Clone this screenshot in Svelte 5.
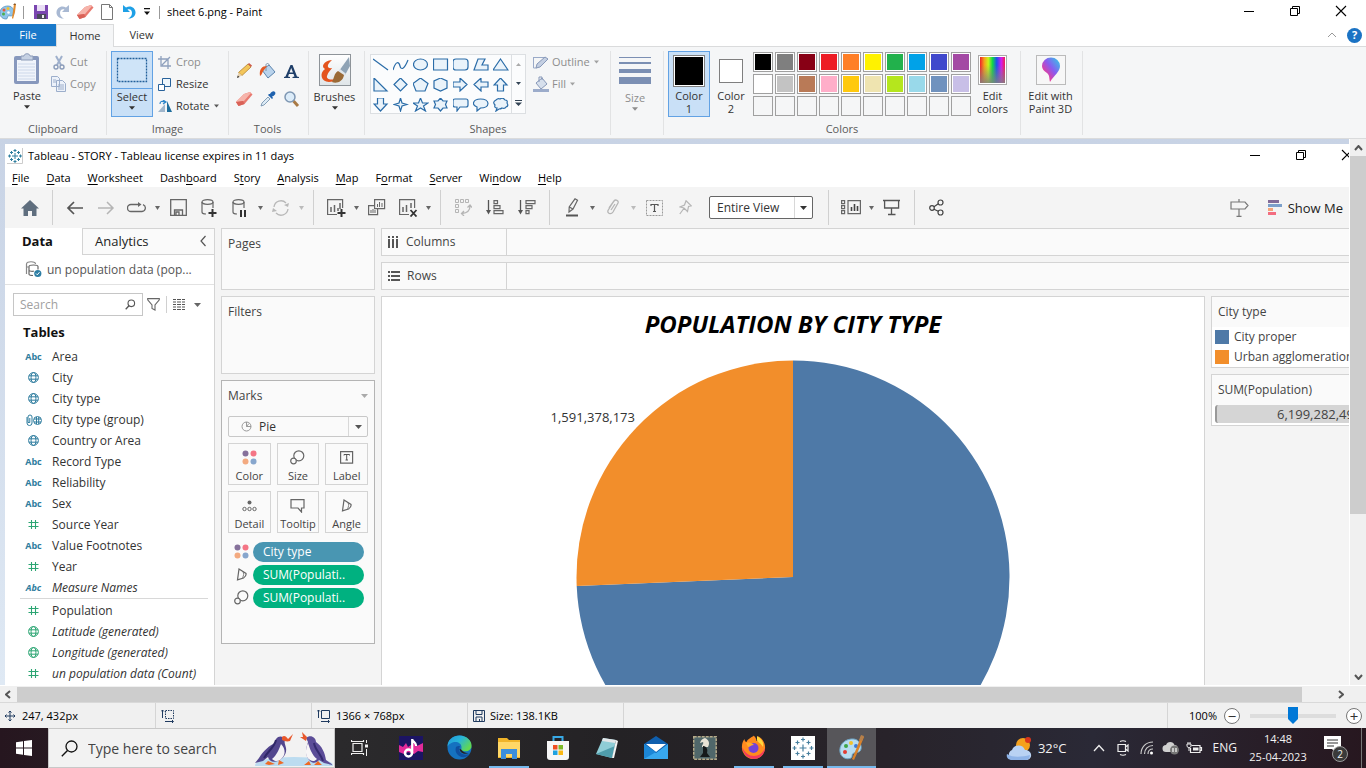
<script>
  const blue = '#2a6ca8';
  const g = '#666';
  const svg = {
    palette: [18, 18, `<path d="M8 3C3 3 0 6 0 10s3 6 6 6c2 0 1-2 2-3s3 1 5-1 1-9-5-9z" fill="#8ec4ea" stroke="#5b93bd" stroke-width=".8"/><circle cx="4" cy="7" r="1.500" fill="#e85a3a"/><circle cx="8" cy="5.500" r="1.500" fill="#f2c12e"/><circle cx="3.500" cy="11" r="1.500" fill="#4caf50"/><circle cx="8.500" cy="9.500" r="1.300" fill="#fff"/><path d="M14 1l2 0-1 8-2 7-1-1z" fill="#e08a2e"/><path d="M13 2l3 0-1-2z" fill="#8a5a2a"/>`],
    floppy: [16, 16, `<path d="M1 1h14v14H1z" fill="#7a46b0"/><path d="M4 1h8v6H4z" fill="#e9def5"/><path d="M4 10h9v5H4z" fill="#4b4b5c"/><path d="M9 11h2v3H9z" fill="#eee"/>`],
    redo: [16, 16, `<path d="M14 1v7H7l2.500-2.500C7 4.500 5 6 5 9s2 4.500 4 5.500C5 15 1 12 1.500 8S6 1 11 3.500z" fill="#a9b9d3"/>`],
    undo: [16, 16, `<path d="M2 1v7h7L6.500 5.500C9 4.500 11 6 11 9s-2 4.500-4 5.500C11 15 15 12 14.500 8S10 1 5 3.500z" fill="#1ea0e6"/>`],
    eraser: [18, 16, `<path d="M9 3l6-2 2.500 2.500-8 9.500-6 2L1 11z" fill="#e8796f"/><path d="M9 3l6-2 1 1-7 8-7 1-1-.5z" fill="#f6b4ab"/><path d="M1 11l7-1 1.500 3-6 2z" fill="#d96258"/>`],
    page: [14, 16, `<path d="M1.500.5h8l3 3v12h-11z" fill="#fff" stroke="#777"/><path d="M9.500.5v3h3" fill="none" stroke="#777"/>`],
    custom: [8, 8, `<path d="M1 0h6v1.300H1zM1 3.500h6L4 7z" fill="#111"/>`],
    down: [7, 4, `<path d="M0 0h7L3.500 4z" fill="currentColor"/>`],
    min: [12, 12, `<path d="M1 6.500h10" stroke="#000"/>`],
    restore: [12, 12, `<path d="M1.500 3.500h7v7h-7zM3.500 3.500v-2h7v7h-2" fill="none" stroke="#000"/>`],
    close: [12, 12, `<path d="M1 1l10 10M11 1L1 11" stroke="#000" stroke-width="1.100"/>`],
    paste: [28, 32, `<rect x="1" y="3" width="25" height="28" rx="2" fill="#8798bd"/><path d="M4 7h19v21H4z" fill="#f0f4fb"/><path d="M5 11h17M5 14h17M5 17h17M5 20h17M5 23h17M5 26h17" stroke="#cdd8ea"/><path d="M8 7V3h3c0-3 6-3 6 0h3v4z" fill="#c6d1e3" stroke="#8c9bb8"/>`],
    cut: [16, 15, `<path d="M5 1l5 9M11 1L6 10" stroke="#9fb0cc" stroke-width="2"/><circle cx="5" cy="12" r="2" fill="none" stroke="#8b9cba" stroke-width="1.400"/><circle cx="11" cy="12" r="2" fill="none" stroke="#8b9cba" stroke-width="1.400"/>`],
    copy: [16, 16, `<path d="M.5.500h6l2 2v8h-8zM5.500 4.500h6l3 3v8h-9z" fill="#edf2fa" stroke="#9caecb"/><path d="M7 9h6M7 11h6M7 13h6M2 4h3M2 6h3" stroke="#9caecb"/>`],
    selectbox: [32, 26, `<rect x="1.500" y="1.500" width="29" height="23" fill="#cfe4f8" stroke="#215f9a" stroke-width="1.300" stroke-dasharray="2 1"/>`],
    crop: [15, 13, `<path d="M3 0v10h10M0 3h10v10M4 9l8-8" fill="none" stroke="#8ea0bd" stroke-width="1.300"/>`],
    resize: [15, 13, `<path d="M4.500.5h8v8h-8z" fill="#eef6fc" stroke="#28629a"/><path d="M.5 6.500h6v6h-6z" fill="#fff" stroke="#28629a"/>`],
    rotate: [15, 13, `<path d="M7 12V4L0 12z" fill="#9fb6cc"/><path d="M9 12V1l5 11z" fill="#1d6d9c"/><path d="M2 4c0-3 2-3 5-2M5 0l3 2-3 2" fill="none" stroke="#2e86c9" stroke-width="1.200"/>`],
    pencil: [16, 16, `<path d="M12 1l3 3-9 8.500L2.500 9.500z" fill="#f3c65b" stroke="#b3822c" stroke-width=".8"/><path d="M2.500 9.500L1 15l5-2.500z" fill="#e9d3b0"/><path d="M1 15l.8-2.500L3.500 14z" fill="#333"/><path d="M12 1l1-1 3 2.500L15 4z" fill="#cf5b4b"/>`],
    bucket: [17, 16, `<path d="M3 7l7-5 6 7-7 6z" fill="#b9d3ec" stroke="#5c84ad"/><path d="M7 8V2c0-2 3-2 3 0" fill="none" stroke="#7c93ab"/><path d="M8 3C3 3 0 6 1 13c2-1 2-4 4-6z" fill="#e45a24"/>`],
    letter: [15, 15, `<path d="M0 14v-1l1.500-.5L6.500 1h2l4.500 11.500 2 .5v1H8.500v-1l2-.5-1-2.500H5l-1 2.500 2 .5v1zM5.500 8.500h3.500L7.200 4z" fill="#1f3f69"/>`],
    dropper: [16, 16, `<path d="M1 15l1-3 6-6 2 2-6 6z" fill="#dceaf5" stroke="#6a8aa8" stroke-width=".8"/><path d="M8 4l4 4 1-1-1-1.500c3-1 4-3 3-4.500S11.500 0 10 3L9 3z" fill="#1f62ae"/>`],
    lens: [16, 17, `<path d="M9.500 10l4.500 5" stroke="#a97a45" stroke-width="3"/><circle cx="6" cy="6" r="5" fill="#dcecf9" stroke="#7e97b3" stroke-width="1.500"/>`],
    brush: [32, 32, `<defs><linearGradient id="bg" x2="0" y2="1"><stop stop-color="#fff"/><stop offset="1" stop-color="#dfe5e8"/></linearGradient></defs><rect x=".5" y=".5" width="31" height="31" fill="url(#bg)" stroke="#8e9499"/><path d="M13 6C4 7 2 13 6 15c-6 4-4 13 4 13 5 0 9-3 10-5-6 4-13 3-12-1s4-6 5-8c-5 1-6-3 0-8z" fill="#e4541d"/><path d="M20 17L30 3l1 9-5 9z" fill="#8fa3b5"/><path d="M21 15l5 4 1 1-2 3-6-5z" fill="#dfe5ea"/><path d="M19 17l6 4c-1 7-8 9-12 7 2-3 2-9 6-11z" fill="#9a6a36"/>`],
    outline: [16, 14, `<path d="M.5 2.500h12M.5 2v11h3" fill="none" stroke="#9aaac8"/><path d="M12 2l3 2-8 8-4 1 1-4z" fill="#c4cfe2" stroke="#8798b8"/>`],
    fillb: [16, 16, `<path d="M3 7l6-5 5 6-6 5z" fill="#d6dfec" stroke="#8798b8"/><path d="M6 6V1h3v3" fill="none" stroke="#8798b8"/><path d="M0 13h16v3H0z" fill="#9caccb"/>`],
    linesz: [32, 32, `<path d="M0 2h32v1H0zM0 7h32v2H0zM0 14h32v4H0zM0 22h32v7H0z" fill="#7b8fb3"/>`],
    rainbow: [29, 30, `<defs><linearGradient id="rb"><stop stop-color="#f0202a"/><stop offset=".17" stop-color="#f6a01c"/><stop offset=".33" stop-color="#c9f51a"/><stop offset=".5" stop-color="#10d848"/><stop offset=".67" stop-color="#1c50f0"/><stop offset=".85" stop-color="#d21cf0"/><stop offset="1" stop-color="#ee2050"/></linearGradient><linearGradient id="rg" x2="0" y2="1"><stop stop-color="#808080" stop-opacity="0"/><stop offset=".3" stop-color="#808080" stop-opacity="0"/><stop offset="1" stop-color="#808080" stop-opacity=".85"/></linearGradient></defs><rect x=".5" y=".5" width="28" height="29" fill="#fff" stroke="#aaa"/><path d="M2 2h25v26H2z" fill="url(#rb)"/><path d="M2 2h25v26H2z" fill="url(#rg)"/>`],
    paint3d: [30, 30, `<defs><linearGradient id="p3" x1="1" x2="0" y2="1"><stop stop-color="#2ad4e6"/><stop offset=".45" stop-color="#8a5af0"/><stop offset=".75" stop-color="#e83c9a"/><stop offset="1" stop-color="#f7a52c"/></linearGradient></defs><rect x=".5" y=".5" width="29" height="29" fill="#f7f7f7" stroke="#bbb"/><path d="M6 11a9 8.500 0 0118 0c0 6-6 9-10 16-1-4 0-6-3-9-3-2-5-4-5-7z" fill="url(#p3)"/>`],
    tableau: [16, 16, `<path d="M8 5v6M5 8h6M8 1v3M6.500 2.500h3M8 12v3M6.500 13.500h3M1 8h3M2.500 6.500v3M12 8h3M13.500 6.500v3M4.500 3v3M3 4.500h3M11.500 3v3M10 4.500h3M4.500 10v3M3 11.500h3M11.500 10v3M10 11.500h3" stroke="#2f7f9f" fill="none"/><path d="M0 15.500h15.500V0" fill="none" stroke="#ccc"/>`],
    home: [18, 16, `<path d="M9 0l9 8.500h-2.500V16H11v-5H7v5H2.500V8.500H0z" fill="#5f6e7e"/>`],
    back: [18, 14, `<path d="M17 7H2M8 1L2 7l6 6" fill="none" stroke="#555" stroke-width="1.700"/>`],
    fwd: [18, 14, `<path d="M1 7h15M10 1l6 6-6 6" fill="none" stroke="#b5b5b5" stroke-width="1.500"/>`],
    loop: [20, 12, `<path d="M12 2.500H4a3.500 3.500 0 000 7h11a3.500 3.500 0 001-6.800" fill="none" stroke="${g}" stroke-width="1.300"/><path d="M11 0l3.500 2.500L11 5z" fill="${g}"/>`],
    save: [17, 17, `<path d="M.7.700h15.600v15.600H.7zM4.500 16v-5h8v5M6 16v-3h3v3" fill="none" stroke="${g}" stroke-width="1.300"/>`],
    dbplus: [16, 18, `<ellipse cx="6.500" cy="3" rx="5.500" ry="2.300" fill="none" stroke="${g}" stroke-width="1.200"/><path d="M1 3v10c0 1.500 2 2 4 2M12 3v6" fill="none" stroke="${g}" stroke-width="1.200"/><path d="M11.500 10v8M7.500 14h8" stroke="#333" stroke-width="2"/>`],
    dbpause: [16, 18, `<ellipse cx="6.500" cy="3" rx="5.500" ry="2.300" fill="none" stroke="${g}" stroke-width="1.200"/><path d="M1 3v10c0 1.500 2 2 4 2M12 3v6" fill="none" stroke="${g}" stroke-width="1.200"/><path d="M9 11v7M13 11v7" stroke="#333" stroke-width="2"/>`],
    refresh: [18, 16, `<path d="M2 7a7 7 0 0112-4M16 9a7 7 0 01-12 4" fill="none" stroke="#b8b8b8" stroke-width="1.300"/><path d="M17 3l-1 4-4-2zM0 12l1-4 4 3z" fill="#b8b8b8"/>`],
    chartplus: [19, 18, `<path d="M10 15.500H.6V.6h15v8.500" fill="none" stroke="${g}" stroke-width="1.200"/><path d="M4 8v5M7.500 6v7M11 9v3M13 4v6" stroke="${g}" stroke-width="1.500"/><path d="M14.500 10v8M10.500 14h8" stroke="#333" stroke-width="2"/>`],
    dup: [18, 17, `<path d="M6.600.6h10v9h-10zM6 6.600H.6v9h9V10" fill="none" stroke="${g}" stroke-width="1.200"/><path d="M9.500 5v3M11.500 3v5M14 4v4M3 11v3M5 10v4M7 11v3" stroke="${g}"/>`],
    chartx: [19, 18, `<path d="M10 15.500H.6V.6h15v8.500" fill="none" stroke="${g}" stroke-width="1.200"/><path d="M4 8v5M7.500 6v7M12 4v5" stroke="${g}" stroke-width="1.500"/><path d="M11.500 11l6 6.500M17.500 11l-6 6.500" stroke="#333" stroke-width="1.800"/>`],
    swap: [17, 17, `<path d="M.5.5h3v3h-3zM5.500.5h3v3h-3zM10.500.5h3v3h-3zM.5 5.500h3v3h-3zM.5 10.500h3v3h-3z" fill="none" stroke="#b5b5b5"/><path d="M15 7c0 4-3 7-8 7.500M12.500 8.500L15 6l2 2.500M9 12l-2.500 2.500L9 17" fill="none" stroke="#b5b5b5" stroke-width="1.300"/>`],
    sortasc: [18, 15, `<path d="M2.500 0v12" stroke="#555" stroke-width="1.300"/><path d="M0 10h5l-2.500 4.500z" fill="#555"/><path d="M8 .6h3.500v3H8zM8 5.600h6v3H8zM8 10.600h9v3H8z" fill="none" stroke="${g}" stroke-width="1.200"/>`],
    sortdesc: [18, 15, `<path d="M2.500 0v12" stroke="#555" stroke-width="1.300"/><path d="M0 10h5l-2.500 4.500z" fill="#555"/><path d="M8 .6h9v3H8zM8 5.600h6v3H8zM8 10.600h3v3H8z" fill="none" stroke="${g}" stroke-width="1.200"/>`],
    marker: [13, 19, `<path d="M9 .8l2.500 1.400L7 11 3 14l.2-5zM3.200 9L7 11" fill="none" stroke="${g}" stroke-width="1.200"/><path d="M0 16.500h12v2H0z" fill="#555"/>`],
    clip: [14, 17, `<path d="M3 9l5-7c1.500-2 5-.5 4 2L7 13c-2 3-6 1.500-5-1.500L6 5M5 11l4-6" fill="none" stroke="#b5b5b5" stroke-width="1.300"/>`],
    tbox: [17, 16, `<rect x=".5" y=".5" width="16" height="15" fill="none" stroke="#999" stroke-dasharray="2 1"/><path d="M5 6V4.500h7V6M8.500 4.500v7M7 11.500h3" fill="none" stroke="#555" stroke-width="1.200"/>`],
    pin: [13, 16, `<path d="M7 .8l5.300 5-2.800.7-1 5L5 8 1 7l4.500-2zM4.800 8.500L.8 14" fill="none" stroke="#b5b5b5" stroke-width="1.200"/>`],
    layout: [20, 15, `<path d="M.6.600h3v3h-3zM.6 5.600h3v3h-3zM.6 10.600h3v3h-3zM7 .6h12.400v13H7z" fill="none" stroke="${g}" stroke-width="1.200"/><path d="M10.500 7v4M13.500 4v7M16.500 6v5" stroke="#444" stroke-width="1.600"/>`],
    present: [18, 17, `<path d="M0 1.500h17M1.600 2v7h14V2M8.500 9v6M5 15.500h7.500" fill="none" stroke="#555" stroke-width="1.300"/>`],
    share: [16, 17, `<circle cx="3" cy="9" r="2.300" fill="none" stroke="#444" stroke-width="1.200"/><circle cx="11.500" cy="3.500" r="2.500" fill="none" stroke="#444" stroke-width="1.200"/><circle cx="11.500" cy="13.500" r="2.500" fill="none" stroke="#444" stroke-width="1.200"/><path d="M5 7.800l4.300-3M5 10.200l4.300 2" stroke="#444" stroke-width="1.200"/>`],
    sign: [19, 18, `<path d="M1 3h14l3 3.500-3 3.500H1zM9 0v3M9 10v7M6.500 17.400h5" fill="none" stroke="#777" stroke-width="1.200"/>`],
    showme: [14, 15, `<path d="M0 0h11v3H0z" fill="#826b98"/><path d="M0 4h14v3H0z" fill="#7c9fca"/><path d="M0 8h5v3H0z" fill="#f3a479"/><path d="M0 12h8v3H0z" fill="#f36d80"/>`],
    source: [17, 17, `<path d="M1.500 13V3c0-3 9-3 9 0M1.500 6h2" fill="none" stroke="#888" stroke-width="1.200"/><path d="M4 5.500c0-2 9-2 9 0v3M4 5.500V13c0 1 2 1.500 4 1.500M4 9c0 1.500 4 1.500 5 1" fill="none" stroke="#666" stroke-width="1.200"/><circle cx="12.800" cy="12.500" r="3.600" fill="#2d7ea4"/><path d="M11 12.500l1.300 1.300 2.200-2.600" fill="none" stroke="#fff"/>`],
    find: [11, 11, `<circle cx="6.300" cy="4.300" r="3.300" fill="none" stroke="#555" stroke-width="1.100"/><path d="M4 6.800L.7 10.300" stroke="#555" stroke-width="1.300"/>`],
    filter: [13, 13, `<path d="M.7.600h11.600v1.200L8 7v5L5 10.500V7L.7 1.800z" fill="none" stroke="#666" stroke-width="1.100"/>`],
    grid: [13, 11, `<path d="M0 .5h3M4 .5h4M9 .5h3M0 3h3M4 3h4M9 3h3M0 5.500h3M4 5.500h4M9 5.500h3M0 8h3M4 8h4M9 8h3M0 10.500h3M4 10.500h4M9 10.500h3" stroke="#555"/>`],
    globe: [11, 11, `<circle cx="5.500" cy="5.500" r="4.900" fill="none" stroke="currentColor"/><ellipse cx="5.500" cy="5.500" rx="2.400" ry="4.900" fill="none" stroke="currentColor"/><path d="M1 3.800h9M1 7.200h9" stroke="currentColor"/>`],
    group: [16, 12, `<path d="M1 3v6a2.500 2.500 0 005 0V3a2 2 0 00-4 0v5.500h1.800V4" fill="none" stroke="currentColor"/><circle cx="11.500" cy="6.500" r="4" fill="#fff" stroke="currentColor"/><path d="M8 5h7M8 8h7M10.500 3v7M12.700 3v7" stroke="currentColor"/>`],
    hash: [11, 11, `<path d="M3.500 1v9M7.500 1v9M.5 3.500h10M.5 7.500h10" stroke="currentColor" stroke-width="1.100"/>`],
    columns: [11, 12, `<path d="M0 0h2v2H0zM0 3h2v9H0zM4 0h2v2H4zM4 3h2v9H4zM8 0h2v2H8zM8 3h2v9H8z" fill="#555"/>`],
    rows: [12, 10, `<path d="M0 0h2v2H0zM3 0h9v2H3zM0 4h2v2H0zM3 4h9v2H3zM0 8h2v2H0zM3 8h9v2H3z" fill="#555"/>`],
    pie: [11, 11, `<circle cx="5.500" cy="5.500" r="4.500" fill="none" stroke="#999"/><path d="M5.500 1v4.500H10M5.500 5.500l2.500-3" fill="none" stroke="#999"/>`],
    color: [15, 15, `<circle cx="3.500" cy="3.500" r="3" fill="#86719b"/><circle cx="11.500" cy="3.500" r="3" fill="#f47585"/><circle cx="3.500" cy="11.500" r="3" fill="#f3aa80"/><circle cx="11.500" cy="11.500" r="3" fill="#87a6cd"/>`],
    size: [15, 15, `<circle cx="8.800" cy="5.800" r="5" fill="none" stroke="#666" stroke-width="1.200"/><circle cx="3.500" cy="11" r="2.800" fill="#fafafa" stroke="#666" stroke-width="1.200"/>`],
    label: [14, 13, `<path d="M.6.600h12v11.500H.6z" fill="none" stroke="#666" stroke-width="1.200"/><path d="M4 4.500V3.500h5.500v1M6.700 3.500v5.500M5.500 9h2.500" fill="none" stroke="#555"/>`],
    detail: [15, 12, `<circle cx="7.500" cy="2.500" r="2" fill="#666"/><circle cx="2.500" cy="9" r="1.700" fill="none" stroke="#666"/><circle cx="7.500" cy="9" r="1.700" fill="none" stroke="#666"/><circle cx="12.500" cy="9" r="1.700" fill="none" stroke="#666"/>`],
    tooltip: [15, 14, `<path d="M1 .6h13v8.400h-2.500v4L8 9H1z" fill="none" stroke="#666" stroke-width="1.200"/>`],
    angle: [12, 13, `<path d="M3 1l7 4.500c.5 2-1 3.500-2.500 4.500L1.500 11.800z" fill="none" stroke="#666" stroke-width="1.200"/><path d="M7 3.800c1 1.500.8 3.700-.5 6" fill="none" stroke="#666" stroke-width=".8"/>`],
    move: [12, 12, `<path d="M6 1v10M1 6h10M4.500 2.500L6 1l1.500 1.500M4.500 9.500L6 11l1.500-1.500M2.500 4.500L1 6l1.500 1.500M9.500 4.500L11 6 9.500 7.500" fill="none" stroke="#1f3a5f"/>`],
    selsize: [14, 14, `<rect x="4.500" y="1.500" width="8" height="8" fill="none" stroke="#1f3a5f" stroke-dasharray="1.500 1"/><path d="M1.500 1v8M0 2.500L1.500 1 3 2.500M4 12.500h8M11 11l1.500 1.500L11 14" fill="none" stroke="#1f3a5f"/>`],
    imgsize: [14, 14, `<path d="M4.500 1.500h8v8h-8zM1.500 1v8M0 2.500L1.500 1 3 2.500M4 12.500h8M11 11l1.500 1.500L11 14" fill="none" stroke="#1f3a5f"/>`],
    disk: [12, 12, `<path d="M.5.5h11v11H.5zM3 .5v4h6v-4M3 11.500V7h6v4.500M6.500 9v2" fill="none" stroke="#1f3a5f"/>`],
    win: [16, 16, `<path d="M0 2.200L7 1.200V7.500H0zM8 1l8-1v7.500H8zM0 8.500h7v6.300l-7-1zM8 8.500h8V16l-8-1z" fill="#fff"/>`],
    search: [17, 17, `<circle cx="10.500" cy="6.500" r="5.500" fill="none" stroke="#111" stroke-width="1.300"/><path d="M6.500 10.500L.8 16.200" stroke="#111" stroke-width="1.400"/>`],
    penguins: [80, 36, `<ellipse cx="40" cy="35" rx="39" ry="8" fill="#bcdcf0"/><path d="M29 7c-5-2-8 2-8 6C16 15 9 21 5 28l-4 5 8-2 5-4c1 4 5 6 10 4 6-3 9-8 8-13-1-4-2-6-1-8z" fill="#53468e"/><path d="M27 14c5 5 5 12-1 16-3 2-6 1-8-1 5-4 7-10 9-15z" fill="#f4f2f5"/><path d="M28 7c2-2 4-1 6 2l5-5-3 7c-3 1-6 0-8-1z" fill="#e8582c"/><path d="M22 10c-2 8-8 11-12 18" stroke="#2f2767" fill="none" stroke-width="2"/><path d="M14 31l7 3-6 1-4-1zM25 30l5 3-6 2z" fill="#ee6a24"/><path d="M52 8c4-4 10-1 10 4 6 4 9 11 10 18l7 5-9-2-5-3c-2 3-6 4-9 1-6-6-4-13-2-19z" fill="#5c4d98"/><path d="M54 13c-3 7-3 14 2 17 3 2 5 1 7-1-5-4-7-10-9-16z" fill="#f7f5f6"/><path d="M53 7l-5-5 1 5-3 0 6 4z" fill="#e8582c"/><path d="M60 13c1 7 7 11 9 18" stroke="#352b70" fill="none" stroke-width="2"/><path d="M55 31l-5 4h7zM64 31l4 4h-8z" fill="#ee6a24"/>`],
    taskview: [17, 17, `<path d="M2 4.500h9v8H2zM.5 1v1.500h12V1M.5 16v-1.500h12V16" fill="none" stroke="#eee" stroke-width="1.200"/><path d="M15.500 1v3M15.500 10v7" stroke="#eee"/><path d="M14 5.500h3v3h-3z" fill="#eee"/>`],
    music: [24, 24, `<path d="M0 0h24v24H0z" fill="#1c1463"/><path d="M0 9l4 2 3-4 2 4 6-4 3 3 6-3v9l-5-1-4 3-6-2-4 2-5-2z" fill="#e42b9b"/><circle cx="9.500" cy="17" r="3.500" fill="none" stroke="#fff" stroke-width="2.500"/><path d="M13.200 17V3c0 3 4 3 4 7" fill="none" stroke="#fff" stroke-width="2.200"/>`],
    edge: [25, 25, `<defs><linearGradient id="eg" x2="1" y2=".6"><stop stop-color="#2196dd"/><stop offset=".5" stop-color="#28b5d8"/><stop offset="1" stop-color="#62d84f"/></linearGradient></defs><circle cx="12.500" cy="12.500" r="12" fill="#1572c0"/><path d="M.6 12C0 5 6 .5 12.500.5 20 .5 25 6 24.500 11c0 4-4 6-8 5-3-.5-2-2-2-4 0-3-3-5-6-5S1 9 .6 12z" fill="url(#eg)"/><path d="M9 12c-2 6 3 11 9 10 2-.5 3-1.500 4-3-5 2-10-1-10-5l1-3c-2 0-3 0-4 1z" fill="#0f4fa0"/><path d="M12.500 14c.5 4 5 6 10 4-2 .5-6-.5-7-2s-3-3-3-2z" fill="#252326"/>`],
    folder: [24, 24, `<path d="M1 2h9l2 2h11v18H1z" fill="#f0b429"/><path d="M1 6h22v15H1z" fill="#ffd766"/><path d="M4 23V13h16v10h-5v-5H9v5z" fill="#3b8edb"/>`],
    store: [24, 26, `<path d="M7.500 7V2h9v5" fill="none" stroke="#38a9e6" stroke-width="2"/><path d="M1 6h22v16c0 2-1 3-3 3H4c-2 0-3-1-3-3z" fill="#f6f6f6"/><path d="M7 10h4.500v4.500H7z" fill="#ef4f23"/><path d="M12.500 10H17v4.500h-4.500z" fill="#7cba28"/><path d="M7 15.500h4.500V20H7z" fill="#1fa2e0"/><path d="M12.500 15.500H17V20h-4.500z" fill="#fbb813"/>`],
    notepad: [24, 24, `<path d="M8 2l13 2-4 18L1 18z" fill="#8fcdd6"/><path d="M8 2l13 2-1 3L7 5z" fill="#e2e6e8"/><path d="M1 18l16 4 3-12z" fill="#4f9dac"/><path d="M21 4l2 1-4 17-2 0z" fill="#f4f4f4"/>`],
    mail: [26, 24, `<path d="M1 8L13 0l12 8v15H1z" fill="#0f5fae"/><path d="M1 8l12 9 12-9v15H1z" fill="#38a8ee"/><path d="M3 8h20l-10 8z" fill="#fff"/><path d="M1 8l12 8L1 23z" fill="#1c86d6"/>`],
    chess: [24, 24, `<rect x=".7" y=".7" width="22.500" height="22.500" fill="#50676a" stroke="#b6ab8a" stroke-width="1.500" stroke-dasharray="3 1"/><path d="M12 2c4 2 5 5 3 9H9c0-3 2-3 1-5l-3 1c1-3 2-4 5-5z" fill="#e9e4d6"/><path d="M10 10c4 0 5 4 4 7l3 4H7l3-4z" fill="#15191a"/>`],
    firefox: [25, 25, `<path d="M12.500 1c0-1 3 2 3 5 2 0 2-3 1-5 6 3 8 8 7.500 13A11.500 11.500 0 111 11c0-3 1-5 2.500-7 0 2 1 3 2 3 1-3 4-4 7-6z" fill="#ff8b1f"/><path d="M1 12c1 7 6 12 12 12s11-5 11-11c-2 5-6 8-11 8S4 18 1 12z" fill="#f43a5e"/><path d="M16 1c5 3 7 7 6 11-2-4-5-4-6-7z" fill="#ffd83d"/><circle cx="12.500" cy="13" r="5" fill="#7542d8"/><path d="M5 8c4-1 6 0 8 2-3 0-4 2-6 2z" fill="#ffac2a"/>`],
    tabtask: [24, 24, `<path d="M0 0h24v24H0z" fill="#fff"/><path d="M12 8.500v7M8.500 12h7M12 1.500v4M10 3.500h4M12 18.500v4M10 20.500h4M1.500 12h4M3.500 10v4M18.500 12h4M20.500 10v4M6.500 4.500v4M4.500 6.500h4M17.500 4.500v4M15.500 6.500h4M6.500 15.500v4M4.500 17.500h4M17.500 15.500v4M15.500 17.500h4" stroke="#48809f" stroke-width="1.200"/>`],
    painttask: [26, 26, `<path d="M12 4C4 5 0 11 1 17s7 8 11 6c2-1 0-4 3-5s6 0 7-4-2-11-10-10z" fill="#b7dcf0" stroke="#6fa6c6"/><circle cx="6" cy="17" r="2" fill="#e23c32"/><circle cx="7" cy="11" r="2" fill="#3fa648"/><circle cx="12" cy="8" r="2" fill="#f2c12e"/><circle cx="17" cy="11" r="2" fill="#3c79d6"/><path d="M22 1l3 1-5 12-5 11-2-1 5-12z" fill="#d9822b"/><path d="M20 5l2-5 3 1-2 5z" fill="#b5804b"/>`],
    weather: [26, 25, `<circle cx="17" cy="9" r="7" fill="#f5a11c"/><circle cx="22" cy="4" r="3" fill="#d9361c"/><path d="M6 24a5.500 5.500 0 010-10 7 7 0 0113 0c8 0 8 10 1 10z" fill="#b9d2f3"/><path d="M6 24c-4 0-6-3-5-6 6 4 15 3 23 1 0 3-2 5-4 5z" fill="#8fb4e8"/>`],
    up: [12, 8, `<path d="M1 7l5-5.500L11 7" fill="none" stroke="#eee" stroke-width="1.300"/>`],
    meet: [12, 16, `<path d="M3 1.500c2-1 4-1 6 0M3 14.500c2 1 4 1 6 0M1 4.500h7.500v7H1zM8.500 7l2.500-2v6L8.500 9" fill="none" stroke="#eee" stroke-width="1.200"/>`],
    wifi: [14, 14, `<path d="M1 13C1 6 6 1 13 1M4.500 13c0-5 3.500-8.500 8.500-8.500M8 13c0-3 2-5 5-5" fill="none" stroke="#ccc" stroke-width="1.200"/><circle cx="11.500" cy="12" r="1.500" fill="#fff"/>`],
    cloud: [18, 14, `<path d="M4 11a3.500 3.500 0 010-7 4.500 4.500 0 018.500 0C17 4 17 11 13 11z" fill="#d0d0d0"/><circle cx="12.500" cy="9" r="4.500" fill="#777"/><path d="M11 7v4M14 7v4" stroke="#fff" stroke-width="1.200"/>`],
    battery: [17, 14, `<path d="M5.500 4.500H14v7H4.500V7M14 6.500h1.500v3H14" fill="none" stroke="#eee" stroke-width="1.200"/><path d="M7 6.500h5.500v3H7z" fill="#eee"/><path d="M1 3h4v2.500L3 7 1 5.500zM2 1v2M4 1v2M3 7v3" fill="none" stroke="#eee"/>`],
    notif: [30, 28, `<path d="M1 2h17v13h-5v4l-4-4H1z" fill="#fff"/><path d="M4 6h11M4 9h11M4 12h7" stroke="#333" stroke-width="1.200"/>`]
  };

  const pal = [
    '#000', '#7f7f7f', '#880015', '#ed1c24', '#ff7f27', '#fff200', '#22b14c', '#00a2e8', '#3f48cc', '#a349a4',
    '#fff', '#c3c3c3', '#b97a57', '#ffaec9', '#ffc90e', '#efe4b0', '#b5e61d', '#99d9ea', '#7092be', '#c8bfe7',
    '', '', '', '', '', '', '', '', '', ''
  ];
  const shapes = [
    ['line', 'M0 1l15 11'], ['curve', 'M0 12C3 2 6 4 7 8s4 4 8-6'], ['ellipse', 'M.5 6.500a7 5.500 0 0014 0 7 5.500 0 00-14 0z'], ['rectangle', 'M.5 1h14v11H.5z'],
    ['rounded rectangle', 'M3 1h9q3 0 3 3v5q0 3-3 3H3q-3 0-3-3V4q0-3 3-3z'], ['polygon', 'M1 12L5 1h7l-3 6h6v5z'], ['triangle', 'M7.500 1L15 12H0z'],
    ['right triangle', 'M1 0v13h13z'], ['diamond', 'M7.500 0L14 6.500 7.500 13 1 6.500z'], ['pentagon', 'M7.500 0L15 5.500 12 13H3L0 5.500z'], ['hexagon', 'M7.500 0L14 3v7l-6.500 3L1 10V3z'],
    ['right arrow', 'M0 4h7V0l7 6.500L7 13V9H0z'], ['left arrow', 'M15 4H8V0L1 6.500 8 13V9h7z'], ['up arrow', 'M7.500 0L14 7h-3.500v6h-6V7H1z'],
    ['down arrow', 'M7.500 13L14 6h-3.500V0h-6v6H1z'], ['four-point star', 'M7.500 0L9 5l5 1.500L9 8l-1.500 5L6 8 1 6.500 6 5z'], ['five-point star', 'M7.500 0l2 5H15l-4.500 3 2 5-5-3-5 3 2-5L0 5h5.500z'],
    ['six-point star', 'M7.500 0L10 3h4l-1.500 3.500L14 10h-4l-2.500 3L5 10H1l1.500-3.500L1 3h4z'], ['rounded callout', 'M2 1h11q2 0 2 2v4q0 2-2 2H7l-3 4V9H2Q0 9 0 7V3q0-2 2-2z'],
    ['oval callout', 'M7.500 1C12 1 15 3 15 5.500S12 10 7.500 10L4 13V9C-2 7 0 1 7.500 1z'], ['cloud callout', 'M3 2q2-2 4-1 3-2 5 1 3 0 2 3 2 3-1 4-1 2-4 1-1 1-3 1l-3 2 1-3q-3 0-2-3-3-3 1-5z']
  ];
  const menus = [['', 'F', 'ile'], ['', 'D', 'ata'], ['', 'W', 'orksheet'], ['Dash', 'b', 'oard'], ['S', 't', 'ory'], ['', 'A', 'nalysis'], ['', 'M', 'ap'], ['F', 'o', 'rmat'], ['', 'S', 'erver'], ['Wi', 'n', 'dow'], ['', 'H', 'elp']];
  const toolGroups = [
    ['back', 'fwd', 'loop', '-', 'save', 'dbplus', 'dbpause', '-', 'refresh', '~'],
    ['chartplus', '-', 'dup', 'chartx', '-'],
    ['swap', 'sortasc', 'sortdesc'],
    ['marker', '-', 'clip', '~', 'tbox', 'pin']
  ];
  const dims = [['abc', 'Area'], ['globe', 'City'], ['globe', 'City type'], ['group', 'City type (group)'], ['globe', 'Country or Area'], ['abc', 'Record Type'], ['abc', 'Reliability'], ['abc', 'Sex'], ['hash', 'Source Year', 1], ['abc', 'Value Footnotes'], ['hash', 'Year', 1], ['abc', 'Measure Names', 0, 1]];
  const meas = [['hash', 'Population', 1], ['globe', 'Latitude (generated)', 1, 1], ['globe', 'Longitude (generated)', 1, 1], ['hash', 'un population data (Count)', 1, 1]];
  const marks = [['color', 'Color'], ['size', 'Size'], ['label', 'Label'], ['detail', 'Detail'], ['tooltip', 'Tooltip'], ['angle', 'Angle']];
  const pills = [['color', 'City type', 'dim'], ['angle', 'SUM(Populati..', ''], ['size', 'SUM(Populati..', '']];
  const tasks = [['music', ''], ['edge', ''], ['folder', 'run'], ['store', ''], ['notepad', ''], ['mail', ''], ['chess', ''], ['firefox', 'run'], ['tabtask', 'run'], ['painttask', 'active']];
  let search = $state('');
  let zoom = $state(50);
</script>

{#snippet ic(n)}
  <svg class="ic" width={svg[n][0]} height={svg[n][1]} viewBox="0 0 {svg[n][0]} {svg[n][1]}" aria-hidden="true">{@html svg[n][2]}</svg>
{/snippet}

{#snippet field(f)}
  <li class:measure={f[2]} class:gen={f[3]}>
    <span class="type">{#if f[0] === 'abc'}<b>Abc</b>{:else}{@render ic(f[0])}{/if}</span>{f[1]}
  </li>
{/snippet}

<div class="app">
  <header class="titlebar">
    {@render ic('palette')}<i class="bar"></i>
    <div class="quick">
      <button aria-label="Save">{@render ic('floppy')}</button>
      <button aria-label="Redo">{@render ic('redo')}</button>
      <button aria-label="Eraser">{@render ic('eraser')}</button>
      <button aria-label="New">{@render ic('page')}</button>
      <button aria-label="Undo">{@render ic('undo')}</button>
    </div>
    <button aria-label="Customize">{@render ic('custom')}</button><i class="bar second-bar"></i>
    <span class="name">sheet 6.png - Paint</span>
    <div class="winctl">
      <button aria-label="Minimize">{@render ic('min')}</button><button aria-label="Restore">{@render ic('restore')}</button><button aria-label="Close">{@render ic('close')}</button>
    </div>
  </header>

  <nav class="tabs">
    <button class="file">File</button><button class="home">Home</button><button class="view">View</button>
    <span class="help"><svg width="10" height="6" aria-hidden="true"><path d="M1 5l4-4 4 4" fill="none" stroke="#999" /></svg><button class="q" aria-label="Help">?</button></span>
  </nav>

  <section class="ribbon">
    <div class="grp g-clip">
      <div class="body">
        <button class="big paste">{@render ic('paste')}<span>Paste</span>{@render ic('down')}</button>
        <div class="stack off"><button>{@render ic('cut')}Cut</button><button>{@render ic('copy')}Copy</button></div>
      </div>
      <span class="cap">Clipboard</span>
    </div>
    <div class="grp g-img">
      <div class="body">
        <button class="big sel"><span class="top">{@render ic('selectbox')}</span><span>Select</span>{@render ic('down')}</button>
        <div class="stack"><button class="dis">{@render ic('crop')}Crop</button><button>{@render ic('resize')}Resize</button><button>{@render ic('rotate')}Rotate{@render ic('down')}</button></div>
      </div>
      <span class="cap">Image</span>
    </div>
    <div class="grp g-tools">
      <div class="tools">
        {#each ['pencil', 'bucket', 'letter', 'eraser', 'dropper', 'lens'] as t}<button aria-label={t}>{@render ic(t)}</button>{/each}
      </div>
      <span class="cap">Tools</span>
    </div>
    <div class="grp g-brush">
      <div class="body"><button class="big">{@render ic('brush')}<span>Brushes</span>{@render ic('down')}</button></div>
    </div>
    <div class="grp g-shapes">
      <div class="body">
        <div class="gallery">
          <div class="cells">
            {#each shapes as s, i}<button aria-label={s[0]}><svg class="ic" width="16" height="14" viewBox="0 0 16 14" aria-hidden="true"><path d={s[1]} fill={i < 2 ? 'none' : '#eaf3fa'} stroke={blue} stroke-width="1.200" /></svg></button>{/each}
          </div>
          <div class="updown"><button class="dis" aria-label="Up"><svg width="5" height="3" aria-hidden="true"><path d="M0 3h5L2.500 0z" fill="#aaa" /></svg></button><button aria-label="Down"><svg width="5" height="3" aria-hidden="true"><path d="M0 0h5L2.500 3z" fill="#345" /></svg></button><button aria-label="More"><svg width="7" height="6" aria-hidden="true"><path d="M0 0h7v1H0zM0 2.500h7L3.500 6z" fill="#345" /></svg></button></div>
        </div>
        <div class="stack off"><button>{@render ic('outline')}Outline{@render ic('down')}</button><button>{@render ic('fillb')}Fill{@render ic('down')}</button></div>
      </div>
      <span class="cap">Shapes</span>
    </div>
    <div class="grp g-size off"><div class="body"><button class="big">{@render ic('linesz')}<span>Size</span>{@render ic('down')}</button></div></div>
    <div class="grp g-colors">
      <div class="body">
        <button class="big col on"><span class="sw black"></span><span>Color<br />1</span></button>
        <button class="big col"><span class="sw white"></span><span>Color<br />2</span></button>
        <div class="palette">{#each pal as c}<button aria-label="Colour {c}" class:filled={c} style:--c={c || 'transparent'}></button>{/each}</div>
        <button class="big edit">{@render ic('rainbow')}<span>Edit<br />colors</span></button>
      </div>
      <span class="cap">Colors</span>
    </div>
    <div class="grp g-3d"><div class="body"><button class="big edit">{@render ic('paint3d')}<span>Edit with<br />Paint 3D</span></button></div></div>
  </section>

  <main class="work">
    <div class="canvas">
      <div class="tableau">
        <header class="ttl">
          {@render ic('tableau')}<span>Tableau - STORY - Tableau license expires in 11 days</span>
          <div class="winctl"><button aria-label="Minimize">{@render ic('min')}</button><button aria-label="Restore">{@render ic('restore')}</button><button aria-label="Close">{@render ic('close')}</button></div>
        </header>
        <nav class="menu">{#each menus as m}<button>{m[0]}<u>{m[1]}</u>{m[2]}</button>{/each}</nav>
        <div class="toolbar">
          <div class="tg"><button aria-label="Home">{@render ic('home')}</button></div>
          {#each toolGroups as grp, i}
            <div class="tg" class:wide={i === 2}>
              {#each grp as t}<button aria-label={t} class:arr={t === '-' || t === '~'} class:pale={t === '~'}>
                {#if t === '-' || t === '~'}<svg width="5" height="4" aria-hidden="true"><path d="M0 0h5L2.500 4z" fill="currentColor" /></svg>{:else}{@render ic(t)}{/if}</button>{/each}
              {#if i === 3}<label class="fit"><select aria-label="Fit"><option>Entire View</option></select><span>{@render ic('down')}</span></label>{/if}
            </div>
          {/each}
          <div class="tg"><button aria-label="Cards">{@render ic('layout')}</button><button class="arr" aria-label="Card options"><svg width="5" height="4" aria-hidden="true"><path d="M0 0h5L2.500 4z" fill="currentColor" /></svg></button><button aria-label="Present">{@render ic('present')}</button></div>
          <div class="tg"><button aria-label="Share">{@render ic('share')}</button></div>
          <div class="show">{@render ic('sign')}<button>{@render ic('showme')}Show Me</button></div>
        </div>
        <div class="panes">
          <aside class="data">
            <div class="dtabs"><button class="on">Data</button><button class="an">Analytics</button><span><svg width="6" height="12" aria-hidden="true"><path d="M5.500 1L1 6l4.500 5" fill="none" stroke="#555" stroke-width="1.200" /></svg></span></div>
            <div class="src">{@render ic('source')}un population data (pop...</div>
            <div class="find">
              <label><input aria-label="Search fields" placeholder="Search" bind:value={search} />{@render ic('find')}</label>
              {@render ic('filter')}<i></i>{@render ic('grid')}<span>{@render ic('down')}</span>
            </div>
            <h2>Tables</h2>
            <ul>{#each dims as f}{@render field(f)}{/each}</ul>
            <ul class="second">{#each meas as f}{@render field(f)}{/each}</ul>
          </aside>
          <div class="cards">
            <section class="card pages">Pages</section>
            <section class="card filters">Filters</section>
            <section class="card marks">
              <div class="mh">Marks{@render ic('down')}</div>
              <label class="marktype">{@render ic('pie')}<select aria-label="Mark type"><option>Pie</option></select><span>{@render ic('down')}</span></label>
              <div class="mgrid">{#each marks as m}<button><span>{@render ic(m[0])}</span>{m[1]}</button>{/each}</div>
              <div class="pills">{#each pills as p}<div>{@render ic(p[0])}<button class={p[2]}>{p[1]}</button></div>{/each}</div>
            </section>
          </div>
          <div class="sheet">
            <div class="shelf"><span>{@render ic('columns')}Columns</span></div>
            <div class="shelf"><span>{@render ic('rows')}Rows</span></div>
            <div class="lower">
              <div class="viz">
                <h1>POPULATION BY CITY TYPE</h1>
                <svg class="chart" width="484" height="434" viewBox="-242 -217 484 434" role="img" aria-label="Population by city type">
                  <path d="M0 0V-216.500A216.500 216.500 0 1 1 -216.300 9z" fill="#4e79a7" />
                  <path d="M0 0V-216.500A216.500 216.500 0 0 0 -216.300 9z" fill="#f28e2b" />
                  <text x="-158" y="-155" text-anchor="end">1,591,378,173</text>
                </svg>
              </div>
              <div class="legends">
                <section><h3>City type</h3><div class="li"><i class="b"></i>City proper</div><div class="li"><i class="o"></i>Urban agglomeration</div></section>
                <section><h3>SUM(Population)</h3><div class="sum">6,199,282,490</div></section>
              </div>
            </div>
          </div>
        </div>
      </div>
    </div>
    <div class="vscroll"><svg width="9" height="6" aria-hidden="true"><path d="M1 5l3.500-4L8 5" fill="none" stroke="#555" stroke-width="2" /></svg><i></i><svg width="9" height="6" aria-hidden="true"><path d="M1 1l3.500 4L8 1" fill="none" stroke="#555" stroke-width="2" /></svg></div>
  </main>
  <div class="hscroll"><svg width="6" height="9" aria-hidden="true"><path d="M5 1L1 4.500 5 8" fill="none" stroke="#555" stroke-width="2" /></svg><i></i><svg width="6" height="9" aria-hidden="true"><path d="M1 1l4 3.500L1 8" fill="none" stroke="#555" stroke-width="2" /></svg></div>

  <footer class="status">
    <span>{@render ic('move')}247, 432px</span><span>{@render ic('selsize')}</span><span>{@render ic('imgsize')}1366 × 768px</span><span>{@render ic('disk')}Size: 138.1KB</span>
    <div class="zoom"><label for="zoom">100%</label><button aria-label="Zoom out">−</button><input id="zoom" type="range" bind:value={zoom} /><button aria-label="Zoom in">+</button></div>
  </footer>

  <div class="taskbar">
    <button class="start" aria-label="Start">{@render ic('win')}</button>
    <div class="tsearch">{@render ic('search')}<input aria-label="Windows search" placeholder="Type here to search" />{@render ic('penguins')}</div>
    <button class="task tv" aria-label="Task view">{@render ic('taskview')}</button>
    {#each tasks as t}<button class="task {t[1]}" aria-label={t[0]}>{@render ic(t[0])}</button>{/each}
    <div class="tray">
      <button class="temp">{@render ic('weather')}32°C</button>
      {#each ['up', 'meet', 'wifi', 'cloud', 'battery'] as t}<button class="ti" aria-label={t}>{@render ic(t)}</button>{/each}
      <span class="lang">ENG</span>
      <div class="clock"><span>14:48</span><span>25-04-2023</span></div>
      <button class="nt" aria-label="Notifications">{@render ic('notif')}<b>2</b></button>
    </div>
  </div>
</div>

<style>
  :global(body) { margin: 0; overflow: hidden; }
  .app { --ui: "Open Sans", "Noto Sans", sans-serif; height: 100vh; display: flex; flex-direction: column; overflow: hidden; font: 11px/14px var(--ui); color: #333; background: #fff; }
  .app * { box-sizing: border-box; }
  button { font: inherit; color: inherit; background: none; border: 0; padding: 0; margin: 0; display: flex; align-items: center; justify-content: center; white-space: nowrap; }
  input, select { font: inherit; color: inherit; }
  .ic { display: block; flex: none; }
  h1, h2, h3, ul { margin: 0; padding: 0; font: inherit; list-style: none; }

  .titlebar { height: 24px; flex: none; display: flex; align-items: center; color: #000; }
  .bar { width: 1px; height: 13px; background: #999; margin: 0 6px 0 5px; }
  .second-bar { margin-left: 8px; }
  .quick { display: flex; margin-right: 3px; }
  .quick button { width: 22px; height: 22px; }
  .titlebar .name { margin-left: 1px; }
  .winctl { margin-left: auto; display: flex; align-self: stretch; }
  .winctl button { width: 46px; }
  .titlebar .winctl { padding-bottom: 3px; margin-right: 2px; }

  .tabs { height: 23px; flex: none; display: flex; border-bottom: 1px solid #dadbdc; }
  .tabs .file { width: 56px; background: #1979ca; color: #fff; }
  .tabs .home { width: 58px; height: 23px; background: #f5f6f7; border: 1px solid #dadbdc; border-bottom: 0; }
  .tabs .view { width: 55px; }
  .help { margin-left: auto; display: flex; align-items: center; gap: 10px; padding-right: 4px; }
  .q { width: 15px; height: 15px; border-radius: 50%; background: #1b73c4; color: #fff; font-weight: 700; }

  .ribbon { flex: none; height: 92px; display: flex; background: #f5f6f7; border-bottom: 1px solid #dadbdc; padding-top: 4px; }
  .grp { display: flex; flex-direction: column; align-items: center; border-right: 1px solid #e2e3e4; height: 84px; padding: 0 4px; flex: none; }
  .body { display: flex; flex: 1; width: 100%; }
  .cap { color: #5a5a5a; height: 14px; flex: none; margin-bottom: -1px; }
  .g-clip { width: 107px; } .g-img { width: 122px; } .g-tools { width: 80px; } .g-brush { width: 56px; }
  .g-shapes { width: 246px; } .g-size { width: 53px; } .g-colors { width: 357px; } .g-3d { width: 62px; }
  .big { flex-direction: column; justify-content: flex-start; height: 66px; padding-top: 3px; border: 1px solid transparent; flex: none; }
  .big > span:not(.top):not(.sw) { line-height: 13px; }
  .big > .ic:last-child { margin-top: 3px; width: 6px; }
  .big .ic:first-child + span { margin-top: 4px; }
  .paste { width: 46px; padding-top: 1px; }
  .sel { width: 42px; background: #c9e0f7; border-color: #62a2e4; padding-top: 0; }
  .sel .top { height: 37px; width: 40px; display: flex; align-items: center; justify-content: center; border-bottom: 1px solid #62a2e4; }
  .sel .top + span { margin-top: 1px; }
  .stack { margin-left: 1px; }
  .stack button { height: 22px; gap: 3px; justify-content: flex-start; }
  .g-img .stack { margin-left: 5px; }
  .off, .dis { color: #8d8d8d; }
  .stack .ic + .ic { width: 5px; margin-left: 1px; opacity: .8; }
  .tools { flex: 1; display: grid; grid-template-columns: repeat(3, 24px); grid-auto-rows: 28px; padding-top: 6px; }
  .g-tools { padding-right: 6px; }
  .g-brush, .g-size { padding: 0 6px 0 2px; }
  .g-brush .big, .g-size .big { width: 100%; }
  .g-brush .big { padding-top: 2px; }
  .g-shapes { padding-left: 5px; }
  .gallery { display: flex; height: 60px; margin-top: 3px; border: 1px solid #dcdfe2; background: #fbfcfd; }
  .cells { display: grid; grid-template-columns: repeat(7, 20px); grid-auto-rows: 20px; }
  .updown { width: 14px; border-left: 1px solid #dcdfe2; display: grid; grid-template-rows: repeat(3, 1fr); }
  .g-shapes .stack { margin-left: 7px; }
  .col { width: 42px; padding-top: 3px; }
  .col.on { background: #c9e0f7; border-color: #62a2e4; }
  .sw { width: 32px; height: 32px; border: 1px solid #7f7f7f; outline: 0; box-shadow: inset 0 0 0 1px #fff; background: #000; margin-bottom: 2px; }
  .sw.white { width: 24px; height: 24px; background: #fff; margin: 4px 4px 6px; }
  .palette { display: grid; grid-template-columns: repeat(10, 20px); grid-auto-rows: 20px; gap: 2px; padding-top: 1px; margin-left: 1px; }
  .palette button { border: 1px solid #a0a0a0; background: var(--c); }
  .palette .filled { box-shadow: inset 0 0 0 1px #fff; }
  .edit { width: 43px; padding-top: 3px; }
  .g-3d { padding: 0 5px 0 3px; }
  .g-3d .edit { width: 100%; }

  .work { flex: 1; min-height: 0; display: flex; background: linear-gradient(#c8d3e5, #dfe9f4); }
  .canvas { flex: 1; min-width: 0; padding: 5px 0 0 5px; overflow: hidden; }
  .tableau { height: 100%; overflow: hidden; background: #f4f4f4; display: flex; flex-direction: column; font-size: 12px; line-height: 16px; }
  .ttl { height: 24px; flex: none; background: #fff; color: #000; display: flex; align-items: center; gap: 5px; padding-left: 2px; font-size: 11px; }
  .ttl .winctl { margin-right: -21px; padding-bottom: 3px; }
  .menu { height: 19px; flex: none; background: #fff; color: #000; display: flex; gap: 17px; padding-left: 7px; font-size: 11px; }
  .menu u { text-underline-offset: 2px; }
  .toolbar { height: 41px; flex: none; display: flex; align-items: center; padding-left: 10px; }
  .tg { display: flex; align-items: center; gap: 1px; height: 35px; border-right: 1px solid #d0d0d0; padding-right: 7px; margin-right: 7px; }
  .tg.wide { gap: 2px; }
  .tg button { width: 30px; height: 30px; }
  .tg .arr { width: 9px; color: #666; }
  .tg .pale { color: #bbb; }
  .tg:nth-last-child(2) { border: 0; }
  .fit { position: relative; display: flex; width: 104px; height: 23px; border: 1px solid #666; border-radius: 2px; margin: 0 8px 0 8px; background: #fff; }
  .fit select, .marktype select { appearance: none; border: 0; background: transparent; width: 100%; padding: 0 7px; outline: 0; opacity: 1; color: #333; }
  .fit span, .marktype span { position: absolute; right: 0; top: 0; bottom: 0; width: 18px; display: flex; align-items: center; justify-content: center; border-left: 1px solid #d8d8d8; pointer-events: none; color: #333; }
  .show { margin-left: auto; display: flex; gap: 19px; align-items: center; padding-right: 6px; color: #222; font-size: 13px; }
  .show button { gap: 6px; }

  .panes { flex: 1; min-height: 0; display: flex; gap: 6px; }
  .data { width: 210px; flex: none; background: #fff; border-right: 1px solid #d4d4d4; color: #222; overflow: hidden; }
  .dtabs { display: flex; height: 27px; font-size: 13px; }
  .dtabs .on { width: 77px; font-weight: 700; padding-right: 12px; color: #111; }
  .dtabs .an { flex: 1; background: #fafafa; border: 1px solid #d4d4d4; border-right: 0; justify-content: flex-start; padding: 0 0 2px 12px; }
  .dtabs .on { padding-bottom: 2px; }
  .dtabs span { width: 20px; background: #fafafa; border: 1px solid #d4d4d4; border-width: 1px 0; display: flex; align-items: center; padding: 0 0 2px 6px; }
  .src { display: flex; align-items: center; gap: 5px; height: 30px; padding-left: 20px; border-bottom: 1px solid #e2e2e2; color: #555; }
  .find { display: flex; align-items: center; padding: 8px 12px 7px 8px; color: #666; }
  .find label { display: flex; align-items: center; width: 130px; height: 23px; border: 1px solid #c6c6c6; padding: 0 6px; margin-right: 4px; }
  .find input { width: 100%; min-width: 0; border: 0; outline: 0; padding: 0; background: none; }
  .find input::placeholder { color: #a0a0a0; }
  .find i { width: 1px; height: 17px; background: #d0d0d0; margin: 0 6px; }
  .find span { margin-left: 8px; }
  .data h2 { font-size: 13px; font-weight: 700; line-height: 18px; padding: 0 18px 5px; color: #111; }
  .data li { display: flex; align-items: center; height: 21px; color: #333; white-space: nowrap; }
  .type { width: 37px; margin-right: 10px; padding-left: 20px; display: flex; align-items: center; justify-content: center; color: #2e7c9e; font-size: 9px; flex: none; }
  .type b { font-weight: 700; }
  .measure .type { color: #2ca573; }
  .gen { font-style: italic; }
  .second { margin: 0 6px 0 15px; border-top: 1px solid #d8d8d8; padding-top: 1px; }
  .second .type { width: 22px; padding-left: 5px; }
  .cards { width: 154px; flex: none; display: flex; flex-direction: column; gap: 6px; color: #444; }
  .card { background: #fafafa; border: 1px solid #d4d4d4; padding: 7px 6px; flex: none; }
  .pages { height: 62px; } .filters { height: 78px; }
  .marks { height: 264px; border-color: #b4b4b4; }
  .mh { display: flex; justify-content: space-between; align-items: center; color: #444; }
  .mh .ic { color: #aaa; }
  .marktype { position: relative; display: flex; align-items: center; height: 21px; margin-top: 12px; border: 1px solid #c8c8c8; border-radius: 2px; padding-left: 12px; }
  .marktype span { color: #555; width: 19px; }
  .mgrid { display: grid; grid-template-columns: repeat(3, 1fr); gap: 6px; margin-top: 6px; }
  .mgrid button { height: 42px; border: 1px solid #d4d4d4; flex-direction: column; font-size: 11px; justify-content: flex-end; }
  .mgrid span { flex: 1; display: flex; align-items: center; padding-top: 3px; }
  .pills { margin-top: 7px; padding: 0 4px 0 6px; }
  .pills div { display: grid; grid-template-columns: 15px 1fr; gap: 4px; align-items: center; justify-items: center; height: 23px; }
  .pills button { width: 100%; height: 20px; border-radius: 10px; background: #00b180; color: #fff; justify-content: flex-start; padding-left: 10px; }
  .pills .dim { background: #4996b2; }
  .sheet { flex: 1; min-width: 0; display: flex; flex-direction: column; gap: 6px; }
  .shelf { height: 28px; flex: none; background: #fafafa; border: 1px solid #d4d4d4; border-right: 0; display: flex; color: #444; }
  .shelf span { width: 125px; border-right: 1px solid #d4d4d4; display: flex; align-items: center; gap: 7px; padding-left: 6px; }
  .lower { flex: 1; min-height: 0; display: flex; gap: 6px; }
  .viz { flex: 1; min-width: 0; background: #fff; border: 1px solid #d4d4d4; border-bottom: 0; display: flex; flex-direction: column; align-items: center; overflow: hidden; }
  .viz h1 { font-size: 24px; line-height: 32px; font-weight: 700; font-style: italic; color: #000; margin: 11px 0 20px; }
  .chart { flex: none; display: block; }
  .chart text { font-size: 13px; fill: #333; }
  .legends { width: 138px; flex: none; display: flex; flex-direction: column; gap: 6px; color: #444; }
  .legends section { background: #fff; border: 1px solid #d4d4d4; border-right: 0; overflow: hidden; white-space: nowrap; }
  .legends h3 { background: #fafafa; padding: 7px 6px; }
  .li { display: flex; align-items: center; gap: 5px; height: 20px; padding-left: 3px; }
  .li i { width: 14px; height: 14px; flex: none; }
  .li .b { background: #4e79a7; } .li .o { background: #f28e2b; }
  .sum { height: 18px; margin: 0 0 2px 3px; background: #d5d5d5; border-left: 2px solid #999; border-radius: 3px 0 0 3px; padding-left: 60px; line-height: 19px; font-size: 13px; }

  .vscroll { width: 17px; flex: none; background: #f0f0f0; border-left: 1px solid #fff; display: flex; flex-direction: column; align-items: center; padding: 6px 0 5px; }
  .vscroll i { flex: none; width: 100%; height: 67%; background: #cdcdcd; margin: 5px 0 auto; }
  .hscroll { height: 17px; flex: none; background: #f0f0f0; border-top: 1px solid #fff; display: flex; align-items: center; padding: 0 22px 0 5px; }
  .hscroll i { height: 15px; width: 96%; background: #cdcdcd; margin: 0 auto 0 6px; }

  .status { height: 26px; flex: none; background: #f0f0f0; border-top: 1px solid #d9d9d9; color: #000; display: flex; align-items: stretch; }
  .status > span { width: 156px; border-right: 1px solid #d5d5d5; display: flex; align-items: center; gap: 6px; padding-left: 4px; }
  .status > span + span { padding-left: 5px; gap: 5px; }
  .zoom { margin-left: auto; width: 199px; border-left: 1px solid #d5d5d5; display: flex; align-items: center; justify-content: flex-end; gap: 7px; padding-right: 4px; }
  .zoom button { width: 16px; height: 16px; border: 1px solid #777; border-radius: 50%; font-size: 15px; line-height: 12px; background: #fff; color: #333; }
  .zoom input { appearance: none; width: 86px; height: 20px; margin: 0 3px; background: linear-gradient(#ddd, #ddd) center / 100% 4px no-repeat; }
  .zoom input::-webkit-slider-thumb { appearance: none; width: 10px; height: 17px; background: #0078d7; clip-path: polygon(0 0, 100% 0, 100% 70%, 50% 100%, 0 70%); }

  .taskbar { height: 40px; flex: none; display: flex; background: linear-gradient(90deg, #26161f, #2b2a2c 25%, #242225 45%, #28232a 65%, #2a2936 80%, #27171f); color: #f2f2f2; }
  .start { width: 48px; }
  .tsearch { width: 287px; background: #f2f2f2; border: 1px solid #c8c8c8; display: flex; align-items: center; padding-left: 12px; color: #333; font-size: 14px; }
  .tsearch input { flex: 1; min-width: 0; border: 0; outline: 0; background: none; padding: 0 0 0 10px; }
  .tsearch input::placeholder { color: #444; }
  .task { width: 49px; border-bottom: 2px solid transparent; padding-top: 1px; }
  .tv { margin-right: 2px; }
  .task.run { background: linear-gradient(#76b9ed, #76b9ed) bottom center / 40px 2px no-repeat border-box; }
  .task.active { background: #57565a; border-bottom-color: #76b9ed; }
  .tray { margin-left: auto; display: flex; align-items: center; border-right: 1px solid #777; margin-right: 4px; }
  .temp { gap: 6px; margin-right: 20px; font-size: 13px; }
  .ti { width: 24px; height: 40px; }
  .lang { margin: 0 7px 0 6px; font-size: 12px; }
  .clock { width: 68px; display: flex; flex-direction: column; align-items: center; line-height: 18px; font-size: 11px; }
  .nt { position: relative; width: 30px; margin: 0 8px 0 11px; }
  .nt b { position: absolute; left: 9px; top: 12px; width: 16px; height: 16px; border-radius: 50%; background: #3a3a3a; border: 1px solid #999; font-size: 10px; line-height: 14px; font-weight: 400; }
</style>
